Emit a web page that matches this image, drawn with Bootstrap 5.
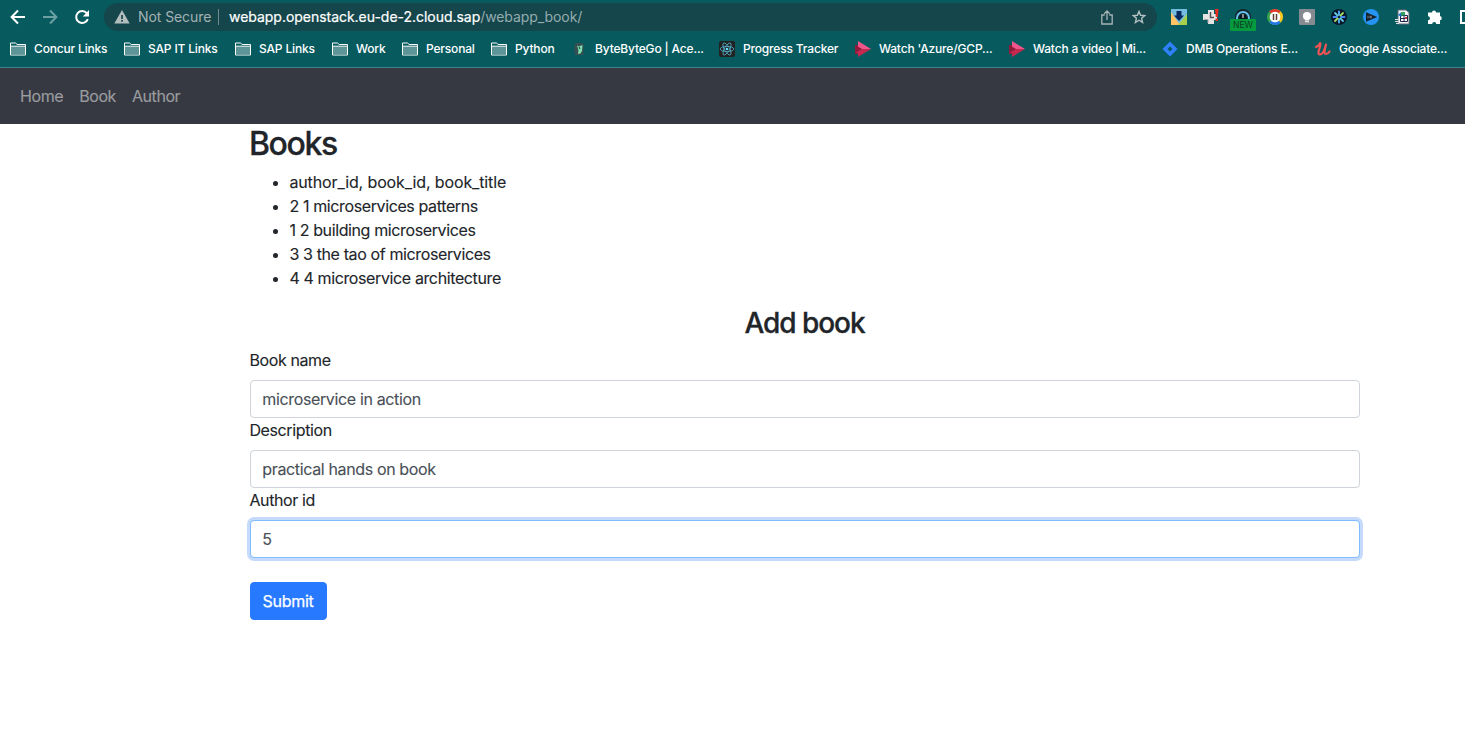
<!DOCTYPE html>
<html lang="en">
<head>
<meta charset="utf-8">
<meta name="viewport" content="width=device-width, initial-scale=1">
<title>Books</title>
<link href="https://cdn.jsdelivr.net/npm/bootstrap@5.3.0/dist/css/bootstrap.min.css" rel="stylesheet">
<style>
body{font-family:Inter,"Liberation Sans",sans-serif;font-size:16px;color:#212529;letter-spacing:-.38px;overflow:hidden;height:734px}
svg{display:block;flex:none}
.chrome{background:#075b5f;border-bottom:1px solid #3b8488;height:68px;color:#fff;overflow:hidden}
.toolbar-row{height:34px}
.tool-btn{width:32px;display:flex;justify-content:center;flex:none}
.omnibox{width:1053px;flex:none;height:28px;margin-top:3px;border-radius:14px;background:#14464b;margin-left:6px;font-size:14px;letter-spacing:0;line-height:28px;white-space:nowrap}
.omnibox .warn{color:#a3b3b5;letter-spacing:-.08px;width:88px;flex:none}
.omnibox .divider{width:1px;height:16px;background:#6f8b8d}
.omnibox .host{letter-spacing:-.03px;margin-left:10px;-webkit-text-stroke:.2px #fff}
.omnibox .path{color:#94adaf;letter-spacing:-.08px}
.exts{margin-left:6px}
.new-tag{left:-5px;top:10px;width:26px;height:12px;border-radius:1px;background:#069a3e;color:#0b3b22;font-size:8.5px;line-height:13px;letter-spacing:.1px;text-align:center}
.bookmarks{height:33px;padding-left:10px;font-size:12px;font-weight:500;letter-spacing:-.17px;white-space:nowrap;padding-bottom:4px}
.bm{display:flex;align-items:center;gap:8px;flex:none}
.navbar-app{background:#363941;height:56px;padding:0 12px}
.navbar-app .nav-link{color:#9a9ca0;padding:8px;letter-spacing:-.42px;-webkit-text-stroke:.15px #9a9ca0}
.content{margin-left:250px;width:1110px;-webkit-text-stroke:.12px currentColor}
h2,h3{position:relative;top:1px;text-indent:-1px}
h2{font-size:32px;font-weight:500;line-height:38.4px;letter-spacing:-1.4px;-webkit-text-stroke:.3px}
h3{font-size:28px;font-weight:500;line-height:33.6px;letter-spacing:-1.05px;-webkit-text-stroke:.3px}
.book-list{padding-left:40px}
.book-list li{text-indent:-.6px}
.book-list li:first-child{letter-spacing:-.12px}
.content label{display:block;margin-bottom:8px;text-indent:-.6px}
.form-control{border-color:#ced4da;border-radius:4px;color:#495057;letter-spacing:-.36px;text-indent:-.7px}
.form-control.is-active{border-color:#80bdff;box-shadow:0 0 0 3px #c5dafd}
.btn-submit{background:#2779ff;border-color:#2779ff;color:#fff;border-radius:4px;width:77px;height:38px;padding:0;letter-spacing:-.3px;text-indent:-1px;-webkit-text-stroke:.25px #fff}
</style>
</head>
<body>
<svg width="0" height="0" class="position-absolute">
  <symbol id="folder" viewBox="0 0 16 16"><path d="M.5 14V2h5l1.700 1.500h8.300V14z" fill="none" stroke="#fff"/><path d="M1 5.500h14v8H1z" fill="#5c9497"/><path d="M.5 5.200h15" stroke="#fff"/></symbol>
  <symbol id="stream" viewBox="0 0 16 16"><path d="M0 4h3v9H0z" fill="#8e1b3c"/><path d="M3 0l13 8H3z" fill="#f0568a"/><path d="M3 16L16 8H6l-6 4h3z" fill="#c52950"/><path d="M0 4l7 4-7 4z" fill="#8e1b3c"/></symbol>
</svg>

<header class="chrome">
  <div class="toolbar-row d-flex">
    <div class="d-flex align-items-center flex-shrink-0" style="margin-left:2px">
      <span class="tool-btn"><svg width="16" height="16" viewBox="0 0 16 16" fill="none" stroke="#fff" stroke-width="2"><path d="M15 8H2M8 1.500L1.600 8 8 14.500"/></svg></span>
      <span class="tool-btn"><svg width="16" height="16" viewBox="0 0 16 16" fill="none" stroke="#6ca0a2" stroke-width="2"><path d="M1 8h13M8 1.500L14.400 8 8 14.500"/></svg></span>
      <span class="tool-btn"><svg width="16" height="16" viewBox="0 0 16 16" fill="none" stroke="#fff" stroke-width="2"><path d="M13.800 10.100A6 6 0 1 1 12.800 4.200L14 5.600"/><path d="M15 1v6.500H8.800z" fill="#fff" stroke="none"/></svg></span>
    </div>
    <div class="omnibox d-flex align-items-center">
      <svg width="16" height="14" viewBox="0 0 16 14" style="margin-left:10px"><path d="M8 0l7.700 13.500H.3z" fill="#b3bdbe"/><path d="M7.200 5h1.700v4H7.200zm0 5h1.700v1.700H7.200z" fill="#14464b"/></svg>
      <span class="warn ps-2">Not Secure</span>
      <span class="divider"></span>
      <span class="host">webapp.openstack.eu-de-2.cloud.sap</span><span class="path">/webapp_book/</span>
      <span class="d-flex align-items-center ms-auto" style="padding-right:2px">
        <span class="tool-btn"><svg width="12" height="15" viewBox="0 0 12 15" fill="none" stroke="#a6b5b6" stroke-width="1.300"><path d="M3.700 5H.8v9h10.400V5H8.300M6 10V1.200M3.200 3.800L6 1l2.800 2.800"/></svg></span>
        <span class="tool-btn"><svg width="14" height="14" viewBox="0 0 14 14" fill="none" stroke="#b3c0c1" stroke-width="1.400"><path d="M7 1.400l1.600 3.900 4.200.3-3.200 2.700 1 4.100L7 10.200l-3.600 2.200 1-4.100-3.200-2.700 4.200-.3z"/></svg></span>
      </span>
    </div>
    <div class="exts d-flex align-items-center flex-shrink-0">
      <span class="tool-btn"><svg width="16" height="16" viewBox="0 0 16 16"><path d="M0 0h16v16H0z" fill="#74bde0"/><path d="M0 3l9 13H0z" fill="#ffc363"/><path d="M16 5v11H7z" fill="#a8cf4c"/><path d="M5.500 2h5v4.500H13l-5 5.500-5-5.500h2.500z" fill="#08285c"/></svg></span>
      <span class="tool-btn"><svg width="16" height="16" viewBox="0 0 16 16"><path d="M5 1h6v4h3v6h-3v4H5v-4H0V5h5z" fill="#e4e4e4"/><path d="M7.500 3v5.500H11" fill="none" stroke="#555" stroke-width="1.500"/><path d="M1 10.500h4V14" fill="none" stroke="#aaa"/><path d="M12 0h3.500l-.7 8h-2zM12.500 9.500h2.500V12h-2.500z" fill="#e92c20"/></svg></span>
      <span class="tool-btn"><span class="position-relative"><svg width="16" height="16" viewBox="0 0 16 16"><circle cx="8" cy="8" r="8" fill="#14242a"/><circle cx="8" cy="9" r="6" fill="none" stroke="#64c2ef" stroke-width="2"/><circle cx="8" cy="9" r="3.500" fill="#06161e"/><path d="M8 5v4" stroke="#fff"/></svg><span class="new-tag position-absolute">NEW</span></span></span>
      <span class="tool-btn"><svg width="16" height="16" viewBox="0 0 16 16" fill="none" stroke-width="3"><circle cx="8" cy="8" r="6.500" fill="#fff" stroke="#39a24a"/><path d="M3.400 3.400A6.500 6.500 0 0 1 12.600 3.400" stroke="#e33b2d"/><path d="M12.600 3.400a6.500 6.500 0 0 1 0 9.200" stroke="#f7c51d"/><path d="M12.600 12.600a6.500 6.500 0 0 1-9.200 0" stroke="#2877e8"/><circle cx="8" cy="8" r="5.300" fill="#fff" stroke="none"/><path d="M6.500 5v6M9.500 5v6" stroke="#5d4034" stroke-width="1.500"/></svg></span>
      <span class="tool-btn"><svg width="16" height="16" viewBox="0 0 16 16"><rect width="16" height="16" rx="1" fill="#868b91"/><circle cx="8" cy="7" r="4.100" fill="#fff"/><path d="M6 10h4v1.500H6zm0 2.200h4v1H6z" fill="#fff"/></svg></span>
      <span class="tool-btn"><svg width="16" height="16" viewBox="0 0 16 16"><circle cx="8" cy="8" r="8" fill="#08182d"/><g stroke-width="1.800" stroke-linecap="round"><path d="M8 2.500V6M8 10v3.500" stroke="#59b8ff"/><path d="M2.500 8H6M10 8h3.500" stroke="#4489fb"/><path d="M4 4l2.500 2.500M9.500 9.500L12 12" stroke="#65c7df"/><path d="M12 4L9.500 6.500M6.500 9.500L4 12" stroke="#a8dc58"/></g></svg></span>
      <span class="tool-btn"><svg width="16" height="16" viewBox="0 0 16 16"><circle cx="8" cy="8" r="8" fill="#2694f5"/><path d="M3 3.200L14.200 8 3 12.800z" fill="#14202a"/><path d="M5 6.700v2.600M7 6.700v2.600M7 8l2-1M7 8l2 1" stroke="#77848d" stroke-width=".9"/></svg></span>
      <span class="tool-btn"><svg width="16" height="16" viewBox="0 0 16 16"><path d="M3 1h8l3 2.500V15H3z" fill="#f3f3f5" stroke="#666a7d"/><path d="M5.500 6.500h7v6h-7zM9 6.500v6M5.500 9.500h7" fill="#fff" stroke="#1d2444"/><path d="M0 10.500h4M0 12.500h4M1 14.500h3" stroke="#ddd"/><path d="M3 6l3.500-3v5z" fill="#1873d1"/><path d="M6 3h4v3.500H6z" fill="#33a05f"/><path d="M10 8h2v2h-2z" fill="#c13544"/></svg></span>
      <span class="tool-btn"><svg width="16" height="16" viewBox="0 0 16 16"><path d="M1.500 3.500H5A2 2 0 0 1 9 3.500h4V7a2.200 2.200 0 0 1 0 4.300V15H9.200a2 2 0 0 0-4 0H1v-3.800a2 2 0 0 0 0-4V3.500z" fill="#fff"/></svg></span>
      <span class="tool-btn"><svg width="16" height="16" viewBox="0 0 16 16"><rect x="2" y="2" width="12" height="12" fill="none" stroke="#fff" stroke-width="2"/></svg></span>
    </div>
  </div>
  <div class="bookmarks d-flex align-items-center">
    <span class="bm" style="width:114px"><svg width="16" height="16"><use href="#folder"/></svg>Concur Links</span>
    <span class="bm" style="width:111px"><svg width="16" height="16"><use href="#folder"/></svg>SAP IT Links</span>
    <span class="bm" style="width:97px"><svg width="16" height="16"><use href="#folder"/></svg>SAP Links</span>
    <span class="bm" style="width:70px"><svg width="16" height="16"><use href="#folder"/></svg>Work</span>
    <span class="bm" style="width:89px"><svg width="16" height="16"><use href="#folder"/></svg>Personal</span>
    <span class="bm" style="width:80px"><svg width="16" height="16"><use href="#folder"/></svg>Python</span>
    <span class="bm" style="width:148px"><svg width="16" height="16" viewBox="0 0 16 16"><rect x="3.500" y="2" width="9" height="12" rx="2.500" fill="#374f51"/><path d="M6 4.500l2 1 3.500-1.500L11 10l-1.500 2.500L7 13l.5-4z" fill="#7be0ae"/><path d="M8 6l1 2" stroke="#234"/></svg>ByteByteGo | Ace...</span>
    <span class="bm" style="width:136px"><svg width="16" height="16" viewBox="0 0 16 16"><rect width="16" height="16" rx="2" fill="#222"/><g fill="none" stroke="#54b3cc" stroke-width=".8"><ellipse cx="8" cy="8" rx="6.800" ry="2.600"/><ellipse cx="8" cy="8" rx="6.800" ry="2.600" transform="rotate(60 8 8)"/><ellipse cx="8" cy="8" rx="6.800" ry="2.600" transform="rotate(120 8 8)"/></g><circle cx="8" cy="8" r="1.300" fill="#61dafb"/></svg>Progress Tracker</span>
    <span class="bm" style="width:154px"><svg width="16" height="16"><use href="#stream"/></svg>Watch 'Azure/GCP...</span>
    <span class="bm" style="width:153px"><svg width="16" height="16"><use href="#stream"/></svg>Watch a video | Mi...</span>
    <span class="bm" style="width:153px"><svg width="16" height="16" viewBox="0 0 16 16"><path d="M8 .5L15.500 8 8 15.500.5 8z" fill="#2f80fa"/><path d="M8 5.500L10.500 8 8 10.500 5.500 8z" fill="#075b5f"/></svg>DMB Operations E...</span>
    <span class="bm"><svg width="16" height="16" viewBox="0 0 16 16" fill="none" stroke="#f05353" stroke-width="2.200" stroke-linecap="round" stroke-linejoin="round"><path d="M1 6c2-1 4-3 4-4 1 0 0 4-1 7-1 3-.5 4.500 1 4.500 3 0 5-6 6-10-1 4-2.500 9.500 0 9.500 1.500 0 2.800-1.300 3.500-2.500"/></svg>Google Associate...</span>
  </div>
</header>

<nav class="navbar navbar-expand navbar-app">
  <div class="navbar-nav">
    <a class="nav-link" href="#">Home</a>
    <a class="nav-link" href="#">Book</a>
    <a class="nav-link" href="#">Author</a>
  </div>
</nav>

<main class="content">
  <h2 class="mb-2">Books</h2>
  <ul class="book-list mb-3">
    <li>author_id, book_id, book_title</li>
    <li>2 1 microservices patterns</li>
    <li>1 2 building microservices</li>
    <li>3 3 the tao of microservices</li>
    <li>4 4 microservice architecture</li>
  </ul>
  <h3 class="text-center mb-2">Add book</h3>
  <form>
    <label for="name">Book name</label>
    <input id="name" class="form-control" value="microservice in action">
    <label for="desc">Description</label>
    <input id="desc" class="form-control" value="practical hands on book">
    <label for="author">Author id</label>
    <input id="author" class="form-control is-active" value="5">
    <button type="button" class="btn btn-submit mt-4">Submit</button>
  </form>
</main>
<script src="https://cdn.jsdelivr.net/npm/bootstrap@5.3.0/dist/js/bootstrap.bundle.min.js"></script>
</body>
</html>
